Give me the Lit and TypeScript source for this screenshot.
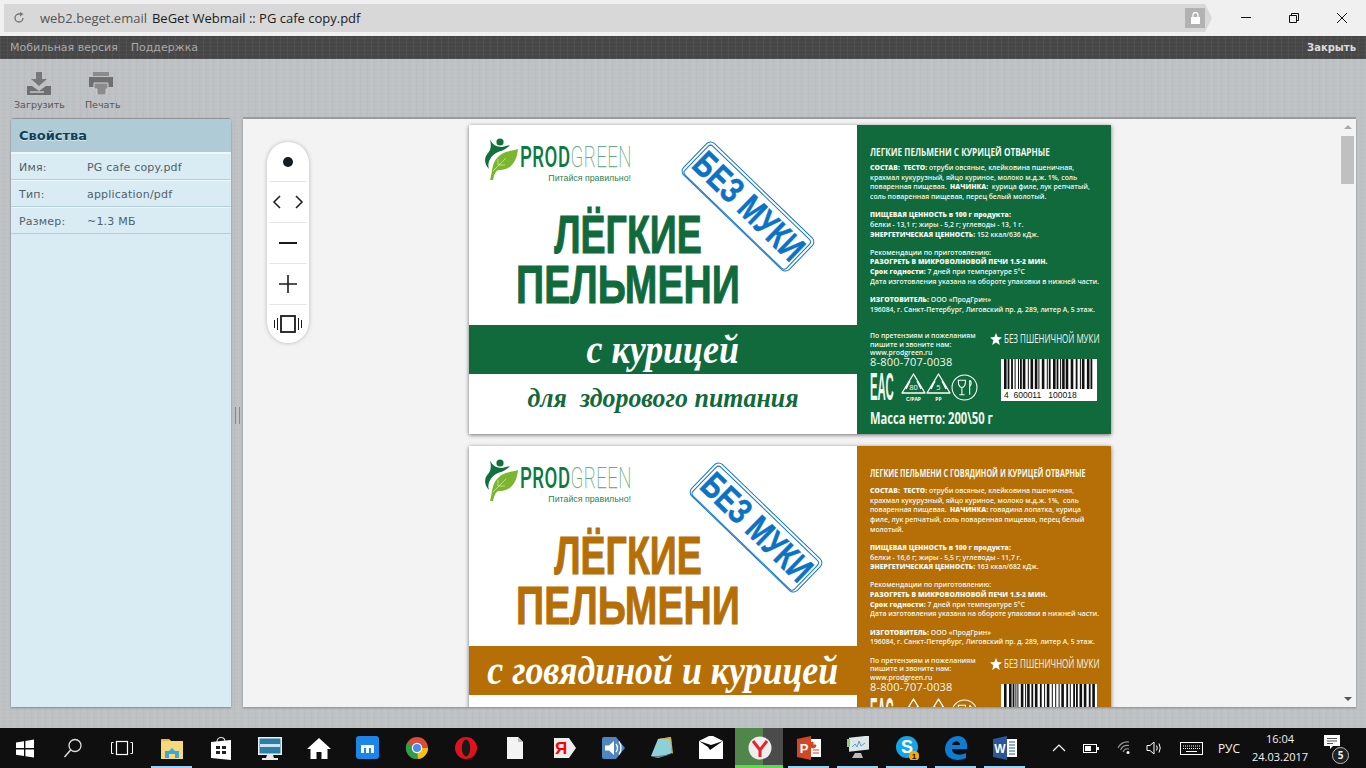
import { LitElement, css, html, svg } from "lit";
import { customElement, property } from "lit/decorators.js";

const weave = `repeating-linear-gradient(90deg, rgba(255,255,255,.045) 0 1px, transparent 1px 3px, rgba(0,0,0,.02) 3px 4px, transparent 4px 7px), repeating-linear-gradient(0deg, rgba(255,255,255,.03) 0 1px, transparent 1px 4px)`;

interface LabelData {
  color: string;
  band: string;
  tagline?: string;
  title: string;
  titleScale: number;
  stampLeft: number;
  backTop: number;
  titleGap: number;
  blocks: unknown[][];
  seed: number;
}

const LABELS: LabelData[] = [
  {
    color: "#116a3c",
    band: "с курицей",
    tagline: "для  здорового питания",
    title: "ЛЕГКИЕ ПЕЛЬМЕНИ С КУРИЦЕЙ ОТВАРНЫЕ",
    titleScale: 0.82,
    stampLeft: 205,
    backTop: 20,
    titleGap: 4,
    seed: 7,
    blocks: [
      [
        html`<b>СОСТАВ:&nbsp; ТЕСТО:</b> отруби овсяные, клейковина пшеничная,`,
        "крахмал кукурузный, яйцо куриное, молоко м.д.ж. 1%, соль",
        html`поваренная пищевая.&nbsp; <b>НАЧИНКА:</b>&nbsp; курица филе, лук репчатый,`,
        "соль поваренная пищевая, перец белый молотый.",
      ],
      [
        html`<b>ПИЩЕВАЯ ЦЕННОСТЬ в 100 г продукта:</b>`,
        "белки - 13,1 г; жиры - 5,2 г; углеводы - 13, 1 г.",
        html`<b>ЭНЕРГЕТИЧЕСКАЯ ЦЕННОСТЬ:</b> 152 ккал/636 кДж.`,
      ],
      [
        "Рекомендации по приготовлению:",
        html`<b>РАЗОГРЕТЬ В МИКРОВОЛНОВОЙ ПЕЧИ 1.5-2 МИН.</b>`,
        html`<b>Срок годности:</b> 7 дней при температуре 5°С`,
        "Дата изготовления указана на обороте упаковки в нижней части.",
      ],
      [
        html`<b>ИЗГОТОВИТЕЛЬ:</b> ООО «ПродГрин»`,
        "196084, г. Санкт-Петербург, Лиговский пр. д. 289, литер А, 5 этаж.",
      ],
    ],
  },
  {
    color: "#b56f06",
    band: "с говядиной и курицей",
    title: "ЛЕГКИЕ ПЕЛЬМЕНИ С ГОВЯДИНОЙ И КУРИЦЕЙ ОТВАРНЫЕ",
    titleScale: 0.72,
    stampLeft: 213,
    backTop: 20,
    titleGap: 6,
    seed: 11,
    blocks: [
      [
        html`<b>СОСТАВ:&nbsp; ТЕСТО:</b> отруби овсяные, клейковина пшеничная,`,
        "крахмал кукурузный, яйцо куриное, молоко м.д.ж. 1%,  соль",
        html`поваренная пищевая.&nbsp; <b>НАЧИНКА:</b> говядина лопатка, курица`,
        "филе, лук репчатый, соль поваренная пищевая, перец белый",
        "молотый.",
      ],
      [
        html`<b>ПИЩЕВАЯ ЦЕННОСТЬ в 100 г продукта:</b>`,
        "белки - 16,6 г; жиры - 5,5 г; углеводы - 11,7 г.",
        html`<b>ЭНЕРГЕТИЧЕСКАЯ ЦЕННОСТЬ:</b> 163 ккал/682 кДж.`,
      ],
      [
        "Рекомендации по приготовлению:",
        html`<b>РАЗОГРЕТЬ В МИКРОВОЛНОВОЙ ПЕЧИ 1.5-2 МИН.</b>`,
        html`<b>Срок годности:</b> 7 дней при температуре 5°С`,
        "Дата изготовления указана на обороте упаковки в нижней части.",
      ],
      [
        html`<b>ИЗГОТОВИТЕЛЬ:</b> ООО «ПродГрин»`,
        "196084, г. Санкт-Петербург, Лиговский пр. д. 289, литер А, 5 этаж.",
      ],
    ],
  },
];

function barcode(seed: number) {
  let x = 3;
  let n = seed;
  const bars = [];
  while (x < 93) {
    n = (n * 37 + 17) % 101;
    const w = 1 + (n % 3) * 0.8;
    bars.push(svg`<rect x=${x} y="0" width=${w} height="30" fill="#111"></rect>`);
    x += w + 1 + ((n >> 2) % 3) * 0.7;
  }
  return bars;
}

@customElement("food-label")
export class FoodLabel extends LitElement {
  @property({ attribute: false }) data!: LabelData;

  static styles = css`
    :host { display: flex; width: 642px; height: 309px; flex: none; position: relative; box-shadow: 0 1px 4px rgba(0,0,0,.55); background: #fff; font-family: "Open Sans", sans-serif; }
    .front { width: 388px; display: flex; flex-direction: column; }
    .brand { display: flex; padding: 11px 0 0 15px; height: 62px; box-sizing: border-box; flex: none; }
    .brand-text { margin-left: 2px; width: 111px; padding-top: 7px; }
    .wordmark { font: 30px/28px Roboto, "Liberation Sans", sans-serif; white-space: nowrap; transform: scaleX(.62); transform-origin: left; color: #5fa882; font-weight: 100; letter-spacing: .7px; -webkit-text-stroke: .25px #5fa882; }
    .wordmark b { color: #0f7a3f; font-weight: 500; letter-spacing: .8px; -webkit-text-stroke: 0; }
    .slogan { font: 400 8.8px/10px "Liberation Sans", sans-serif; color: #1f8556; text-align: right; white-space: nowrap; margin-top: 2px; }
    .headline { width: 318px; margin-top: 22px; height: 116px; flex: none; text-align: center; font: 700 54px/50px "Liberation Sans", sans-serif; -webkit-text-stroke: 1px currentColor; white-space: nowrap; }
    .headline span { display: block; transform: scaleX(.725); }
    .headline span:first-child { transform: scaleX(.695); }
    .band { height: 49px; color: #fff; display: flex; align-items: center; justify-content: center; font: italic 700 39px/49px "Liberation Serif", serif; white-space: nowrap; flex: none; }
    .band span { transform: scaleX(.92); }
    .tagline { flex: 1; text-align: center; font: italic 700 28px/48px "Liberation Serif", serif; white-space: pre; transform: scaleX(.925); }
    .stamp { position: absolute; top: 59px; width: 148px; height: 45px; box-sizing: border-box; transform: rotate(44deg); border: 1.5px solid #1677c9; border-radius: 6px; padding: 2px; background: #fff; }
    .stamp div { height: 100%; border: 1px solid #1677c9; border-radius: 4px; text-align: center; color: #0b72c6; font: 700 36px/36px "Liberation Sans", sans-serif; white-space: nowrap; -webkit-text-stroke: .5px #0b72c6; }
    .stamp span { display: inline-block; transform: scaleX(.76); margin: 0 -40px; }
    .back { flex: 1; min-width: 0; color: #f2f7ef; padding: 0 0 6px 13px; box-sizing: border-box; display: flex; flex-direction: column; }
    .title { font: 700 10px/14px "Open Sans", sans-serif; white-space: nowrap; transform-origin: left; }
    .block { font: 600 7.4px/9.65px "Open Sans", sans-serif; white-space: pre; margin-bottom: 8.6px; transform: scaleX(.925); transform-origin: left; }
    .block b { font-weight: 800; }
    .lower { display: grid; grid-template-columns: 120px 1fr; margin-top: auto; height: 72px; flex: none; }
    .contact { font: 600 7.6px/8.7px "Open Sans", sans-serif; white-space: nowrap; transform: scaleX(.9); transform-origin: left; }
    .phone { font: 400 11px/10px "Open Sans", sans-serif; letter-spacing: .2px; white-space: nowrap; }
    .nowheat { display: flex; align-items: center; gap: 2px; font: 400 12.5px/14px "Open Sans", sans-serif; white-space: nowrap; height: 14px; padding-top: 1px; }
    .nowheat span { transform: scaleX(.64); transform-origin: left; }
    .barcode { width: 96px; height: 42px; background: #fff; margin: 13px 0 0 11px; color: #111; }
    .barcode svg { display: block; }
    .barcode span { display: block; font: 8.5px/10px "Liberation Sans", sans-serif; white-space: pre; padding-left: 3px; }
    .marks { display: flex; align-items: center; margin-top: 6px; height: 29px; }
    .eac { font: 700 38px/29px "Liberation Sans", sans-serif; width: 31px; flex: none; transform: scaleX(.3); transform-origin: left; white-space: nowrap; }
    .marks svg { flex: none; }
    .mass { font: 700 16px/20px "Open Sans", sans-serif; transform: scaleX(.7); transform-origin: left; white-space: nowrap; margin-top: 5px; flex: none; }
  `;

  private recycle(num: string, sub: string) {
    return html`<svg width="25" height="29" viewBox="0 0 25 29">
      <path d="M12.5 1 L24 20 H1 Z M9 8 L5 16 M16 8 L20 16" fill="none" stroke="#fff" stroke-width="1.3" stroke-linejoin="round"></path>
      <text x="12.5" y="16.5" font-size="7.5" text-anchor="middle" fill="#fff" font-family="Open Sans">${num}</text>
      <text x="12.5" y="27.5" font-size="5" font-weight="700" text-anchor="middle" fill="#fff" font-family="Open Sans">${sub}</text>
    </svg>`;
  }

  render() {
    const d = this.data;
    return html`
      <div class="front">
        <div class="brand">
          <svg width="34" height="46" viewBox="0 0 34 46">
            <path d="M6 44 C9 34 7 28 14 21 C19 15 28 15 34 13 C33 24 28 34 16 34 C13 34 11 35 9 44 Z" fill="#7ab72f"></path>
            <path d="M9 35 L22 22 M14 29 V23 M14 29 H21" stroke="#cfe5a8" stroke-width=".8" fill="none"></path>
            <circle cx="16" cy="6" r="3.6" fill="#11703d"></circle>
            <path d="M5 1 C7 7 11 11 18 11 L26 9 C22 14 16 15 12 17 C6 21 3 27 5 33 C0 28 0 21 4 17 C7 14 8 8 5 1 Z" fill="#11703d"></path>
          </svg>
          <div class="brand-text">
            <div class="wordmark"><b>PROD</b>GREEN</div>
            <div class="slogan">Питайся правильно!</div>
          </div>
        </div>
        <div class="headline" style="color:${d.color}"><span>ЛЁГКИЕ</span><span>ПЕЛЬМЕНИ</span></div>
        <div class="band" style="background:${d.color}"><span>${d.band}</span></div>
        <div class="tagline" style="color:${d.color}">${d.tagline ?? ""}</div>
      </div>
      <div class="stamp" style="left:${d.stampLeft}px"><div><span>БЕЗ МУКИ</span></div></div>
      <div class="back" style="background:${d.color};padding-top:${d.backTop}px">
        <div class="title" style="transform:scaleX(${d.titleScale});margin-bottom:${d.titleGap}px">${d.title}</div>
        ${d.blocks.map((lines) => html`<div class="block">${lines.map((l) => html`${l}<br />`)}</div>`)}
        <div class="lower">
          <div>
            <div class="contact">По претензиям и пожеланиям<br />пишите и звоните нам:<br />www.prodgreen.ru</div>
            <div class="phone">8-800-707-0038</div>
            <div class="marks">
              <div class="eac">ЕАС</div>
              ${this.recycle("80", "C/PAP")}
              ${this.recycle("5", "PP")}
              <svg width="27" height="27" viewBox="0 0 26 26">
                <circle cx="13" cy="13" r="12" fill="none" stroke="#fff"></circle>
                <path d="M7 6 H14 C14 11 13 13 10.5 13 C8 13 7 11 7 6 Z M10.5 13 V20 M8 20 H13 M18 6 V20 M18 6 C20 7 20 10 18 12" fill="none" stroke="#fff"></path>
              </svg>
            </div>
          </div>
          <div>
            <div class="nowheat">
              <svg width="12" height="12" viewBox="0 0 12 12"><path d="M6 0 L7.6 4 L12 4.4 L8.6 7.2 L9.8 12 L6 9.4 L2.2 12 L3.4 7.2 L0 4.4 L4.4 4 Z" fill="#fff"></path></svg>
              <span>БЕЗ ПШЕНИЧНОЙ МУКИ</span>
            </div>
            <div class="barcode">
              <svg width="96" height="31" viewBox="0 0 96 31">${barcode(d.seed)}</svg>
              <span>4  600011   100018</span>
            </div>
          </div>
        </div>
        <div class="mass">Масса нетто: 200\\50 г</div>
      </div>
    `;
  }
}

const ICONS: Record<string, unknown> = {
  win: svg`<path d="M3 6.5 L11 5.2 V12 H3 Z M12.4 5 L21 3.6 V12 H12.4 Z M3 13.4 H11 V20 L3 18.8 Z M12.4 13.4 H21 V21.4 L12.4 20.2 Z" fill="#fff"></path>`,
  search: svg`<circle cx="14" cy="9.5" r="6" fill="none" stroke="#ddd" stroke-width="1.3"></circle><path d="M9.6 14 L3.5 21" stroke="#ddd" stroke-width="1.5"></path>`,
  view: svg`<rect x="6.5" y="5.5" width="11" height="13" fill="none" stroke="#fff" stroke-width="1.2"></rect><path d="M3.5 6.5 H1.5 V17.5 H3.5 M20.5 6.5 H22.5 V17.5 H20.5" fill="none" stroke="#fff"></path>`,
  folder: svg`<path d="M1 3 H9 L11 5 H23 V23 H1 Z" fill="#f6d97c"></path><path d="M1 3 H9 V5 H1 Z" fill="#e5b84c"></path><path d="M5 22 V15 H9 L12 12 L15 15 H19 V22 H15 V18 H9 V22 Z" fill="#37a9dd"></path>`,
  store: svg`<path d="M8 6 C8 0 16 0 16 6" fill="none" stroke="#ddd" stroke-width="1.2"></path><path d="M2 6 L22 4 V24 L2 22 Z" fill="#fff"></path><path d="M7 10 H11 V13 H7 Z M13 10 H17 V13 H13 Z M7 15 H11 V18 H7 Z M13 15 H17 V18 H13 Z" fill="#222"></path>`,
  lenovo: svg`<rect x="0" y="1" width="24" height="18" fill="#e9f3f8"></rect><rect x="1.5" y="2.5" width="21" height="15" fill="#2a7ea8"></rect><rect x="2" y="8" width="20" height="3" fill="#cfe3ee"></rect><path d="M9 19 H15 L16 22 H20 V24 H4 V22 H8 Z" fill="#e8e8e8"></path>`,
  home: svg`<path d="M12 2 L24 13 H20.5 V23 H14.5 V16 H9.5 V23 H3.5 V13 H0 Z" fill="#fff"></path>`,
  maxthon: svg`<rect x="0" y="0" width="23" height="23" rx="3" fill="#1d85e8"></rect><path d="M5 17 V9 H18 V17 H15 V12 H13 V17 H10 V12 H8 V17 Z" fill="#fff"></path>`,
  chrome: svg`<circle cx="12" cy="12" r="11" fill="#dd4b39"></circle><path d="M12 12 H23 A11 11 0 0 1 12 23 Z" fill="#f4c20d"></path><path d="M12 12 L13 23 A11 11 0 0 1 2.4 6.5 Z" fill="#2f9e44"></path><circle cx="12" cy="12" r="5.2" fill="#fff"></circle><circle cx="12" cy="12" r="4" fill="#4a8cf0"></circle>`,
  opera: svg`<circle cx="12" cy="12" r="11" fill="#e0121d"></circle><ellipse cx="12" cy="12" rx="4.2" ry="8.4" fill="#1a1a1a"></ellipse>`,
  file: svg`<path d="M4 1 H15 L20 6 V23 H4 Z" fill="#f3f3f3"></path><path d="M15 1 L20 6 H15 Z" fill="#bbb"></path>`,
  ya: svg`<path d="M2 2 H17 L24 12 L17 22 H2 Z" fill="#eee"></path><text x="9" y="18" font-size="17" font-weight="700" text-anchor="middle" fill="#f00" font-family="Liberation Sans">Я</text>`,
  speaker: svg`<path d="M1 3 Q1 1 3 1 H15 L24 12 L15 23 H3 Q1 23 1 21 Z" fill="#4f86c0"></path><path d="M4 9.5 H8 L13 5 V19 L8 14.5 H4 Z" fill="#fff"></path><path d="M15 8 Q18 12 15 16 M18 5.5 Q22 12 18 18.5" stroke="#fff" stroke-width="1.3" fill="none"></path>`,
  note: svg`<path d="M1 20 L8 3 L21 1 L22 17 L8 22 Z" fill="#8fd0d8"></path><path d="M8 3 L21 1 L23 17 L22 18 L20 3 Z" fill="#caa84a"></path><path d="M1 20 L8 22 L22 18 L8 20 Z" fill="#5a7d88"></path>`,
  mail: svg`<path d="M0 5 L12 -1 L24 5 V23 H0 Z" fill="#fff"></path><path d="M0 5 L12 9 L24 5 L11 14 L9 11 Z" fill="#0c0c0c"></path>`,
  yabro: svg`<circle cx="12" cy="12" r="11.5" fill="#eee"></circle><path d="M5 5 L12 14 V21 M19 5 L12 14" fill="none" stroke="#e8232b" stroke-width="3"></path>`,
  ppt: svg`<path d="M0 3 L14 0 V24 L0 21 Z" fill="#d24726"></path><rect x="14" y="3" width="10" height="18" fill="#fff"></rect><path d="M16 6 A3 3 0 1 0 19 9 H16 Z M16 14 H22 M16 17 H22" fill="#d24726" stroke="#d24726"></path><text x="7" y="17" font-size="13" font-weight="700" text-anchor="middle" fill="#fff" font-family="Liberation Sans">P</text>`,
  monitor: svg`<rect x="3" y="2" width="20" height="14" fill="#dfe6e8" transform="skewY(-6)"></rect><path d="M6 11 L9 8 L11 11 L13 5 L15 10 L19 7" stroke="#5aa0c8" fill="none"></path><rect x="1" y="3" width="3" height="8" fill="#8fcf6a"></rect><path d="M9 17 H15 L17 22 H6 Z" fill="#bbb"></path>`,
  skype: svg`<circle cx="12" cy="11" r="11" fill="#12a5e8"></circle><text x="12" y="17" font-size="18" font-weight="700" text-anchor="middle" fill="#fff" font-family="Liberation Sans">S</text><circle cx="19" cy="20" r="5.2" fill="#f6a800"></circle><text x="19" y="23" font-size="8" font-weight="700" text-anchor="middle" fill="#111" font-family="Liberation Sans">1</text>`,
  edge: svg`<path d="M1 14 C1 4 9 0 14 0 C20 0 24 5 23 13 H8 C8 19 16 20 22 17 V22 C14 26 2 24 1 14 Z M8 9 H16 C16 4 9 4 8 9 Z" fill="#0c7cd5" fill-rule="evenodd"></path>`,
  word: svg`<path d="M0 3 L14 0 V24 L0 21 Z" fill="#2b579a"></path><rect x="14" y="3" width="10" height="18" fill="#fff"></rect><path d="M16 6 H22 M16 9 H22 M16 12 H22 M16 15 H22 M16 18 H22" stroke="#2b579a"></path><text x="7" y="16.5" font-size="12" font-weight="700" text-anchor="middle" fill="#fff" font-family="Liberation Sans">W</text>`,
};

const SLOTS: { icon: string; state?: string }[] = [
  { icon: "folder", state: "open" }, { icon: "store" }, { icon: "lenovo" }, { icon: "home" },
  { icon: "maxthon" }, { icon: "chrome" }, { icon: "opera" }, { icon: "file" }, { icon: "ya" },
  { icon: "speaker" }, { icon: "note" }, { icon: "mail" }, { icon: "yabro", state: "active" },
  { icon: "ppt", state: "open" }, { icon: "monitor", state: "open" }, { icon: "skype", state: "open" },
  { icon: "edge", state: "open" }, { icon: "word", state: "open" },
];

@customElement("task-bar")
export class TaskBar extends LitElement {
  static styles = css`
    :host { display: flex; height: 40px; background: #0f0f0f; color: #f2f2f2; font-family: "Open Sans", sans-serif; font-size: 12px; flex: none; }
    .sys { width: 48px; display: flex; align-items: center; justify-content: center; flex: none; }
    .sys:first-child { width: 49px; }
    .sys:nth-child(3) { width: 50px; }
    .slot { width: 49px; height: 40px; display: flex; align-items: center; justify-content: center; position: relative; flex: none; }
    .slot.open::after, .slot.active::after { content: ""; position: absolute; left: 4px; right: 4px; bottom: 0; height: 2px; background: #99d1f5; }
    .slot.active { background: linear-gradient(90deg, #50864c 0 28px, #4b4b4b 28px 48px, #0f0f0f 48px); }
    .slot.active::after { left: 0; right: 1px; height: 3px; background: #62d84e; }
    .tray { margin-left: auto; padding-right: 21px; display: flex; align-items: center; height: 40px; }
    .tray-item { display: flex; align-items: center; justify-content: center; height: 40px; flex: none; }
    .clock { width: 78px; text-align: center; line-height: 18px; font-size: 11px; }
    .lang { width: 24px; }
    .notif { width: 26px; position: relative; }
    .badge { position: absolute; left: 13px; top: 19px; width: 15px; height: 15px; border-radius: 50%; border: 1px solid #bbb; background: #222; font-size: 10px; font-weight: 700; line-height: 15px; text-align: center; }
  `;

  render() {
    return html`
      <div class="sys"><svg width="24" height="24" viewBox="0 0 24 24">${ICONS.win}</svg></div>
      <div class="sys"><svg width="24" height="24" viewBox="0 0 24 24">${ICONS.search}</svg></div>
      <div class="sys"><svg width="24" height="24" viewBox="0 0 24 24">${ICONS.view}</svg></div>
      ${SLOTS.map(
        (s) => html`<div class="slot ${s.state ?? ""}"><svg width="24" height="24" viewBox="0 0 24 24">${ICONS[s.icon]}</svg></div>`
      )}
      <div class="tray">
        <div class="tray-item" style="width:32px"><svg width="14" height="8" viewBox="0 0 14 8"><path d="M1 7 L7 1 L13 7" fill="none" stroke="#fff" stroke-width="1.2"></path></svg></div>
        <div class="tray-item" style="width:32px"><svg width="16" height="9" viewBox="0 0 16 9"><rect x=".5" y=".5" width="13" height="8" fill="none" stroke="#fff"></rect><rect x="2" y="2" width="6" height="5" fill="#fff"></rect><rect x="14" y="3" width="2" height="3" fill="#fff"></rect></svg></div>
        <div class="tray-item" style="width:36px"><svg width="16" height="14" viewBox="0 0 16 14"><path d="M1 7 A11 11 0 0 1 12 1 M3.5 9 A8 8 0 0 1 12 4.5 M6 11 A5 5 0 0 1 12 8" fill="none" stroke="#999" stroke-width="1.1"></path><circle cx="11" cy="11.5" r="1.5" fill="#fff"></circle></svg></div>
        <div class="tray-item" style="width:22px"><svg width="17" height="14" viewBox="0 0 17 14"><path d="M1 4.5 H4 L8 1 V13 L4 9.5 H1 Z M10.5 4.5 Q12 7 10.5 9.5 M13 2.5 Q15.5 7 13 11.5" fill="none" stroke="#fff"></path></svg></div>
        <div class="tray-item" style="width:52px"><svg width="23" height="13" viewBox="0 0 23 13"><rect x=".5" y=".5" width="22" height="12" fill="none" stroke="#fff"></rect><path d="M3 4 H20 M3 6.5 H20" stroke="#fff" stroke-dasharray="1 1"></path><path d="M6 9.5 H17" stroke="#fff"></path></svg></div>
        <div class="tray-item lang">РУС</div>
        <div class="tray-item clock">16:04<br />24.03.2017</div>
        <div class="tray-item notif">
          <svg style="margin-top:-12px" width="16" height="15" viewBox="0 0 16 15"><path d="M0 0 H16 V11 H9 L6 14 V11 H0 Z" fill="#fff"></path><path d="M3 3.5 H13 M3 6 H13 M3 8.5 H9" stroke="#555"></path></svg>
          <span class="badge">5</span>
        </div>
      </div>
    `;
  }
}

@customElement("app-root")
export class AppRoot extends LitElement {
  static styles = css`
    :host { display: flex; flex-direction: column; width: 1366px; height: 768px; overflow: hidden; background: #f0f0f0; font-family: "DejaVu Sans", sans-serif; }
    .browser { height: 36px; flex: none; padding: 4px 0 4px 4px; box-sizing: border-box; display: flex; background: #f0f0f0; }
    .address { width: 1208px; height: 28px; background: #d8d8d8; clip-path: polygon(0 0, 1201px 0, 1208px 50%, 1201px 100%, 0 100%); display: flex; align-items: center; font: 13px "Open Sans", sans-serif; box-sizing: border-box; padding-left: 9px; color: #1c1c1c; white-space: pre; }
    .address .host { color: #555; margin: 0 5px 0 15px; }
    .lock { margin-left: auto; margin-right: 7px; width: 20px; height: 20px; background: #b2b2b2; display: flex; align-items: center; justify-content: center; }
    .winbtns { display: flex; margin-left: 10px; }
    .winbtns div { width: 48px; height: 28px; display: flex; align-items: center; justify-content: center; }
    .topnav { height: 23px; flex: none; background-color: #474747; background-image: ${css([weave] as unknown as TemplateStringsArray)}; display: flex; align-items: center; padding: 0 10px; font-size: 11px; color: #a9a9a9; gap: 13px; }
    .topnav .close { margin-left: auto; color: #dcdcdc; font-weight: 700; font-size: 10px; }
    .workspace { flex: 1; min-height: 0; display: flex; flex-direction: column; background-color: #bec1c3; background-image: ${css([weave] as unknown as TemplateStringsArray)}; }
    .toolbar { height: 60px; flex: none; display: flex; padding: 13px 0 0 14px; box-sizing: border-box; gap: 20px; font-size: 9.5px; color: #555; }
    .tool { display: flex; flex-direction: column; align-items: center; gap: 4px; white-space: nowrap; }
    .main { flex: 1; min-height: 0; display: flex; padding: 0 10px 21px 11px; }
    .panel { width: 220px; flex: none; background: #d9ecf4; border-radius: 3px 3px 0 0; box-shadow: 0 -1px 1px rgba(0,0,0,.25), 0 1px 2px rgba(0,0,0,.3); font-size: 11px; color: #50616b; letter-spacing: .2px; }
    .panel h2 { margin: 0; height: 34px; box-sizing: border-box; background: #afcbd6; font-size: 13px; line-height: 33px; padding-left: 8px; color: #0f3f5c; text-shadow: 0 1px 0 rgba(255,255,255,.6); border-bottom: 1px solid #eef7fa; letter-spacing: 0; }
    .row { display: grid; grid-template-columns: 68px 1fr; height: 27px; line-height: 29px; padding-left: 8px; box-sizing: border-box; border-bottom: 1px solid #b4cfdb; box-shadow: 0 1px 0 #eef7fa inset; overflow: hidden; }
    .splitter { width: 12px; flex: none; display: flex; align-items: center; justify-content: center; }
    .splitter i { width: 3px; height: 17px; border-left: 1px solid #888; border-right: 1px solid #888; margin-top: 5px; }
    .viewer { flex: 1; min-width: 0; position: relative; display: flex; background: #f3f3f3; box-shadow: 0 -2px 0 rgba(120,120,120,.5), 0 1px 2px rgba(0,0,0,.3); }
    .pages { flex: 1; overflow: hidden; display: flex; flex-direction: column; gap: 12px; padding: 6px 0 0 226px; }
    .scroll { width: 13px; flex: none; margin-right: 2px; padding-top: 6px; display: flex; flex-direction: column; align-items: center; }
    .scroll .up, .scroll .down { width: 0; height: 0; border: 4px solid transparent; }
    .scroll .up { border-bottom: 4px solid #a8a8a8; border-top: 0; }
    .scroll .thumb { width: 13px; height: 48px; background: #c0c0c0; margin-top: 7px; }
    .scroll .down { border-top: 4px solid #555; border-bottom: 0; margin-top: auto; margin-bottom: 6px; }
    .zoombar { position: absolute; left: 24px; top: 23px; width: 42px; height: 201px; border-radius: 21px; background: #fff; box-shadow: 0 0 4px rgba(0,0,0,.25); display: flex; flex-direction: column; overflow: hidden; }
    .zoombar div { height: 41px; flex: none; display: flex; align-items: center; justify-content: center; box-sizing: border-box; margin: 0 2px; border-bottom: 1px solid #e6e6e6; }
    .zoombar div:first-child { height: 40px; }
    .zoombar div:last-child { border-bottom: 0; height: 38px; }
  `;

  render() {
    return html`
      <div class="browser">
        <div class="address">
          <svg width="12" height="12" viewBox="0 0 12 12"><path d="M10 6 A4 4 0 1 1 6 2 H8" fill="none" stroke="#777" stroke-width="1.4"></path><path d="M7 0 L10.5 2 L7 4.5 Z" fill="#777"></path></svg>
          <span class="host">web2.beget.email</span><span>BeGet Webmail :: PG cafe copy.pdf</span>
          <span class="lock"><svg width="9" height="12" viewBox="0 0 9 12"><path d="M2 5 V3 A2.5 2.5 0 0 1 7 3 V5" fill="none" stroke="#fff" stroke-width="1.3"></path><rect y="5" width="9" height="7" fill="#fff"></rect></svg></span>
        </div>
        <div class="winbtns">
          <div><svg width="10" height="2"><rect width="10" height="1" fill="#111"></rect></svg></div>
          <div><svg width="10" height="10" viewBox="0 0 10 10"><path d="M.5 2.5 H7.5 V9.5 H.5 Z M2.5 2.5 V.5 H9.5 V7.5 H7.5" fill="none" stroke="#111"></path></svg></div>
          <div><svg width="10" height="10" viewBox="0 0 10 10"><path d="M0 0 L10 10 M10 0 L0 10" stroke="#111"></path></svg></div>
        </div>
      </div>
      <div class="topnav"><span>Мобильная версия</span><span>Поддержка</span><span class="close">Закрыть</span></div>
      <div class="workspace">
        <div class="toolbar">
          <div class="tool">
            <svg width="24" height="23" viewBox="0 0 24 23">
              <path d="M9 0 H15 V7 H20 L12 14 L4 7 H9 Z" fill="#777"></path>
              <path d="M0 14 H5 L12 19 L19 14 H24 V23 H0 Z" fill="#6f6f6f"></path>
              <path d="M3 20 H17" stroke="#ddd" stroke-width="1.2"></path>
            </svg>
            <span>Загрузить</span>
          </div>
          <div class="tool">
            <svg style="margin-right:3px" width="24" height="23" viewBox="0 0 24 23">
              <rect x="4" y="0" width="16" height="4" fill="#8a8a8a"></rect>
              <rect x="0" y="5" width="24" height="10" fill="#6f6f6f"></rect>
              <path d="M5 11 H19 V17 L17 17 V23 H8 L8 17 H5 Z" fill="#8b8b8b" stroke="#d0d0d0"></path>
            </svg>
            <span>Печать</span>
          </div>
        </div>
        <div class="main">
          <aside class="panel">
            <h2>Свойства</h2>
            <div class="row"><span>Имя:</span><span>PG cafe copy.pdf</span></div>
            <div class="row"><span>Тип:</span><span>application/pdf</span></div>
            <div class="row"><span>Размер:</span><span>~1.3 МБ</span></div>
          </aside>
          <div class="splitter"><i></i></div>
          <section class="viewer">
            <div class="pages">${LABELS.map((l) => html`<food-label .data=${l}></food-label>`)}</div>
            <div class="scroll"><span class="up"></span><span class="thumb"></span><span class="down"></span></div>
            <div class="zoombar">
              <div><svg width="12" height="12"><circle cx="6" cy="6" r="5" fill="#141c26"></circle></svg></div>
              <div><svg width="32" height="16" viewBox="0 0 32 16"><path d="M8 2 L2 8 L8 14 M24 2 L30 8 L24 14" fill="none" stroke="#222" stroke-width="1.6"></path></svg></div>
              <div><svg width="18" height="2"><rect width="18" height="2" fill="#1a1a1a"></rect></svg></div>
              <div><svg width="18" height="18" viewBox="0 0 18 18"><path d="M0 9 H18 M9 0 V18" stroke="#1a1a1a" stroke-width="1.6"></path></svg></div>
              <div><svg width="28" height="18" viewBox="0 0 28 18"><rect x="7" y="1" width="14" height="16" fill="none" stroke="#1a1a1a" stroke-width="1.8"></rect><path d="M.5 5 V13 M3.5 3 V15 M24.5 3 V15 M27.5 5 V13" stroke="#1a1a1a"></path></svg></div>
            </div>
          </section>
        </div>
      </div>
      <task-bar></task-bar>
    `;
  }
}
